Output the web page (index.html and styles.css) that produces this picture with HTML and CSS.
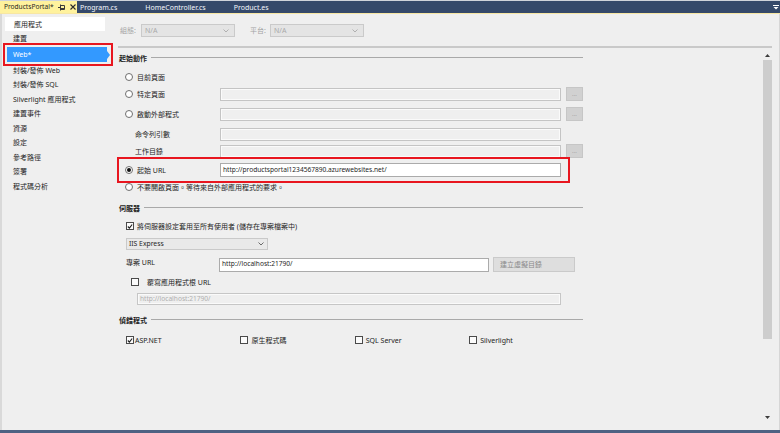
FILE: index.html
```html
<!DOCTYPE html>
<html lang="zh-Hant">
<head>
<meta charset="utf-8">
<title>ProductsPortal</title>
<link rel="stylesheet" href="styles.css">
</head>
<body>
<div class="app">
  <div class="tabbar">
    <div class="tab active">
      <span class="tab-title">ProductsPortal*</span>
      <svg class="pin" width="7" height="7" viewBox="0 0 7 7"><path d="M0 3.5H2.5M2.5 0.5V6.5M2.5 1.5H6.5V5.5H2.5M2.5 4.5H6.5" fill="none" stroke="#3a3a3a" stroke-width="1"/></svg>
      <svg class="close" width="6" height="6" viewBox="0 0 6 6"><path d="M0.5 0.5L5.5 5.5M5.5 0.5L0.5 5.5" stroke="#2a2a2a" stroke-width="1.1"/></svg>
    </div>
    <div class="tabs">
      <div class="tab">Program.cs</div>
      <div class="tab">HomeController.cs</div>
      <div class="tab">Product.es</div>
    </div>
    <svg class="tab-menu" width="6" height="6" viewBox="0 0 6 6"><path d="M0 1.5H6" stroke="#fff" stroke-width="1"/><path d="M0.5 3L5.5 3L3 5.5Z" fill="#fff"/></svg>
  </div>

  <div class="main">
    <nav class="nav">
      <div class="nav-item first">應用程式</div>
      <div class="nav-item">建置</div>
      <div class="web-wrap"><div class="web">Web*</div></div>
      <div class="nav-item">封裝/發佈 Web</div>
      <div class="nav-item">封裝/發佈 SQL</div>
      <div class="nav-item">Silverlight 應用程式</div>
      <div class="nav-item">建置事件</div>
      <div class="nav-item">資源</div>
      <div class="nav-item">設定</div>
      <div class="nav-item">參考路徑</div>
      <div class="nav-item">簽署</div>
      <div class="nav-item">程式碼分析</div>
    </nav>

    <div class="content">
      <div class="config-row">
        <span class="cfg-label">組態:</span>
        <div class="cfg-select"><span>N/A</span><svg width="6" height="4" viewBox="0 0 6 4"><path d="M0.5 0.5L3 3L5.5 0.5" fill="none" stroke="#b0b0b0" stroke-width="1"/></svg></div>
        <span class="cfg-label second">平台:</span>
        <div class="cfg-select"><span>N/A</span><svg width="6" height="4" viewBox="0 0 6 4"><path d="M0.5 0.5L3 3L5.5 0.5" fill="none" stroke="#b0b0b0" stroke-width="1"/></svg></div>
      </div>
      <div class="rule"></div>

      <div class="scroller">
        <div class="form">
          <div class="section-head">起始動作</div>

          <div class="row r1">
            <div class="label-col"><span class="radio"></span><span class="lbl">目前頁面</span></div>
          </div>
          <div class="row r2">
            <div class="label-col"><span class="radio"></span><span class="lbl">特定頁面</span></div>
            <div class="field"></div>
            <div class="dots">...</div>
          </div>
          <div class="row r3">
            <div class="label-col"><span class="radio"></span><span class="lbl">啟動外部程式</span></div>
            <div class="field"></div>
            <div class="dots">...</div>
          </div>
          <div class="row r4">
            <div class="label-col sub"><span>命令列引數</span></div>
            <div class="field"></div>
          </div>
          <div class="row r5">
            <div class="label-col sub"><span>工作目錄</span></div>
            <div class="field"></div>
            <div class="dots">...</div>
          </div>
          <div class="row r6 hl">
            <div class="label-col"><span class="radio on"></span><span class="lbl">起始 URL</span></div>
            <div class="field live">http://productsportal1234567890.azurewebsites.net/</div>
          </div>
          <div class="row r7">
            <div class="label-col wide"><span class="radio"></span><span class="lbl">不要開啟頁面。等待來自外部應用程式的要求。</span></div>
          </div>

          <div class="section-head s2">伺服器</div>
          <div class="row chk-row">
            <span class="check on"><svg width="7" height="7" viewBox="0 0 7 7"><path d="M1 3.5L2.8 5.3L6 1.2" fill="none" stroke="#1e1e1e" stroke-width="1.3"/></svg></span>
            <span class="chk-lbl">將伺服器設定套用至所有使用者 (儲存在專案檔案中)</span>
          </div>
          <div class="row sel-row">
            <div class="select"><span>IIS Express</span><svg width="6" height="4" viewBox="0 0 6 4"><path d="M0.5 0.5L3 3L5.5 0.5" fill="none" stroke="#6a6a6a" stroke-width="1"/></svg></div>
          </div>
          <div class="row url-row">
            <div class="label-col proj"><span>專案 URL</span></div>
            <div class="field live short">http://localhost:21790/</div>
            <div class="vdir">建立虛擬目錄</div>
          </div>
          <div class="row chk-row2">
            <span class="check"></span>
            <span class="chk-lbl">覆寫應用程式根 URL</span>
          </div>
          <div class="row dis-row">
            <div class="field dis">http://localhost:21790/</div>
          </div>

          <div class="section-head s3">偵錯程式</div>
          <div class="dbg">
            <div class="dbg-item"><span class="check on"><svg width="7" height="7" viewBox="0 0 7 7"><path d="M1 3.5L2.8 5.3L6 1.2" fill="none" stroke="#1e1e1e" stroke-width="1.3"/></svg></span><span class="d-lbl tight">ASP.NET</span></div>
            <div class="dbg-item"><span class="check"></span><span class="d-lbl">原生程式碼</span></div>
            <div class="dbg-item"><span class="check"></span><span class="d-lbl">SQL Server</span></div>
            <div class="dbg-item"><span class="check"></span><span class="d-lbl">Silverlight</span></div>
          </div>
        </div>

        <div class="scrollbar">
          <div class="sb-up"><svg width="5" height="3" viewBox="0 0 5 3"><path d="M0 3L2.5 0L5 3Z" fill="#3c3c3c"/></svg></div>
          <div class="thumb"></div>
          <div class="sb-fill"></div>
          <div class="sb-down"><svg width="5" height="3" viewBox="0 0 5 3"><path d="M0 0L2.5 3L5 0Z" fill="#3c3c3c"/></svg></div>
        </div>
      </div>
    </div>
  </div>
  <div class="bottombar"></div>
</div>
</body>
</html>
```
FILE: styles.css
```css
* { box-sizing: border-box; }
html, body { margin: 0; padding: 0; }
body {
  width: 780px;
  height: 433px;
  overflow: hidden;
  background: #efefef;
  font-family: "Noto Sans", "Noto Sans CJK TC", sans-serif;
  font-size: 7px;
  color: #1e1e1e;
  line-height: 1;
}
.app { display: flex; flex-direction: column; height: 433px; }

/* ---------- tab bar ---------- */
.tabbar {
  height: 14px;
  flex: none;
  display: flex;
  align-items: stretch;
  background: #35496a;
  border-top: 1px solid #cfd3da;
  border-bottom: 1px solid #f7e6a3;
}
.tab {
  display: flex;
  align-items: center;
  color: #f4f6fa;
  font-size: 7px;
  white-space: nowrap;
}
.tab.active {
  width: 77px;
  flex: none;
  background: #fff29d;
  color: #1e1e1e;
  padding-left: 4px;
  font-size: 6.6px;
}
.tab-title { width: 49px; flex: none; overflow: visible; }
.tab.active .pin { margin-left: 5px; flex: none; }
.tab.active .close { margin-left: 5px; flex: none; }
.tabs { display: flex; gap: 28px; margin-left: 3px; flex: 1; }
.tab-menu { align-self: center; margin-right: 1px; }

/* ---------- main ---------- */
.main {
  flex: 1;
  display: flex;
  border-left: 2px solid #d9d9d9;
  border-right: 1px solid #d6d6d6;
  min-height: 0;
}
.nav { width: 108px; flex: none; padding-top: 3px; }
.nav-item {
  height: 14.5px;
  display: flex;
  align-items: center;
  padding-left: 11px;
  white-space: nowrap;
}
.nav-item.first {
  height: 14px;
  width: 100px;
  margin-left: 3px;
  padding-left: 9px;
  background: #ffffff;
}
.nav-item.first + .nav-item { height: 14px; }
.web-wrap { height: 18px; padding: 2px 0 1px 5px; }
.web {
  position: relative;
  width: 100px;
  height: 15px;
  background: #3399ff;
  color: #ffffff;
  padding-left: 6px;
  display: flex;
  align-items: center;
}
.web::before {
  content: "";
  position: absolute;
  right: -3px;
  top: 3.5px;
  border-left: 3px solid #3399ff;
  border-top: 4px solid transparent;
  border-bottom: 4px solid transparent;
}
.web::after {
  content: "";
  position: absolute;
  left: -4px;
  right: -6px;
  top: -4px;
  bottom: -4px;
  border: 2px solid #e8161f;
}

/* ---------- content ---------- */
.content { flex: 1; display: flex; flex-direction: column; min-width: 0; }
.config-row {
  margin-top: 10px;
  height: 13px;
  display: flex;
  align-items: center;
  padding-left: 10px;
}
.cfg-label { width: 21px; color: #a3a3a3; }
.cfg-label.second { margin-left: 15px; width: 20px; }
.cfg-select {
  width: 94px;
  height: 13px;
  background: #e4e4e4;
  border: 1px solid #cacaca;
  display: flex;
  align-items: center;
  justify-content: space-between;
  padding: 0 5px 0 3px;
  color: #a9a9a9;
}
.rule {
  margin: 9px 7px 0 8px;
  height: 2px;
  background: #c9c9c9;
  flex: none;
}

.scroller { flex: 1; display: flex; min-height: 0; }
.form { width: 473px; flex: none; padding-left: 9px; padding-top: 4px; }

.section-head {
  display: flex;
  align-items: center;
  height: 12px;
  font-weight: bold;
  white-space: nowrap;
}
.section-head::after {
  content: "";
  flex: 1;
  height: 1px;
  background: #a9a9a9;
  margin-left: 4px;
  margin-top: -2px;
}
.section-head.s2 { margin-top: 8px; }
.section-head.s3 { margin-top: 9px; }

.row { display: flex; align-items: center; height: 14px; }
.r1 { margin-top: 6px; }
.r2 { margin-top: 3px; }
.r3 { margin-top: 6px; }
.r4 { margin-top: 6px; }
.r5 { margin-top: 3px; }
.r6 { margin-top: 5px; }
.r7 { margin-top: 3px; }

.label-col { width: 101px; flex: none; display: flex; align-items: center; white-space: nowrap; }
.label-col.wide { width: auto; }
.label-col.sub { padding-left: 16px; }
.radio {
  width: 8px;
  height: 8px;
  margin-left: 6px;
  border: 1px solid #6f6f6f;
  border-radius: 50%;
  background: #ffffff;
  flex: none;
  display: flex;
  align-items: center;
  justify-content: center;
}
.radio.on::after {
  content: "";
  width: 4px;
  height: 4px;
  border-radius: 50%;
  background: #111111;
}
.lbl { margin-left: 4px; }

.field {
  width: 341px;
  height: 13px;
  flex: none;
  background: #efefef;
  border: 1px solid #c4c4c4;
  box-shadow: inset 0 0 0 1px #fafafa;
  display: flex;
  align-items: center;
  padding-left: 2px;
  font-size: 6.6px;
  white-space: nowrap;
}
.field.live { background: #ffffff; border-color: #ababab; box-shadow: none; height: 14px; }
.dots {
  width: 17px;
  height: 14px;
  margin-left: 5px;
  background: #d1d1d1;
  border: 1px solid #c6c6c6;
  color: #9c9c9c;
  font-size: 6px;
  display: flex;
  align-items: flex-end;
  justify-content: center;
  padding-bottom: 3px;
}
.hl { position: relative; }
.hl::after {
  content: "";
  position: absolute;
  left: -2px;
  top: -6px;
  bottom: -6px;
  width: 449px;
  border: 2px solid #e8161f;
}

/* server */
.check {
  width: 8px;
  height: 8px;
  border: 1px solid #4a4a4a;
  background: #fbfbfb;
  flex: none;
  display: flex;
  align-items: center;
  justify-content: center;
}
.chk-row { margin-top: 5px; }
.chk-row .check { margin-left: 7px; }
.chk-lbl { margin-left: 3px; white-space: nowrap; }
.sel-row { margin-top: 5px; height: 12px; }
.select {
  width: 142px;
  height: 12px;
  margin-left: 7px;
  background: #e9e9e9;
  border: 1px solid #c9c9c9;
  display: flex;
  align-items: center;
  justify-content: space-between;
  padding: 0 3px 0 2px;
  font-size: 6.8px;
}
.url-row { margin-top: 7px; height: 15px; align-items: stretch; }
.label-col.proj { width: 100px; padding-left: 7px; align-items: flex-start; padding-top: 2px; }
.field.short { width: 270px; height: 14px; align-self: center; }
.vdir {
  width: 82px;
  height: 15px;
  margin-left: 4px;
  background: #dedede;
  border: 1px solid #cacaca;
  color: #8a8a8a;
  padding-left: 6px;
  display: flex;
  align-items: center;
}
.chk-row2 { margin-top: 3px; }
.chk-row2 .check { margin-left: 12px; }
.chk-row2 .chk-lbl { margin-left: 8px; }
.dis-row { margin-top: 4px; height: 12px; }
.field.dis {
  width: 424px;
  height: 12px;
  margin-left: 18px;
  color: #b0b0b0;
  border-color: #c6c6c6;
}

/* debugger */
.dbg {
  margin-top: 7px;
  height: 14px;
  display: grid;
  grid-template-columns: repeat(4, 114.4px);
  padding-left: 7px;
  align-items: center;
}
.dbg-item { display: flex; align-items: center; white-space: nowrap; }
.d-lbl { margin-left: 3px; }
.d-lbl.tight { margin-left: 1px; }

/* scrollbar */
.scrollbar {
  width: 9px;
  margin-left: auto;
  margin-right: 7px;
  display: flex;
  flex-direction: column;
}
.sb-up { height: 12px; display: flex; align-items: flex-end; justify-content: center; padding-bottom: 3px; }
.thumb { height: 279px; background: #cdcdcd; }
.sb-fill { flex: 1; }
.sb-down { height: 16px; display: flex; justify-content: center; padding-top: 2px; }

.bottombar { height: 3px; flex: none; background: #4e6283; }
```
